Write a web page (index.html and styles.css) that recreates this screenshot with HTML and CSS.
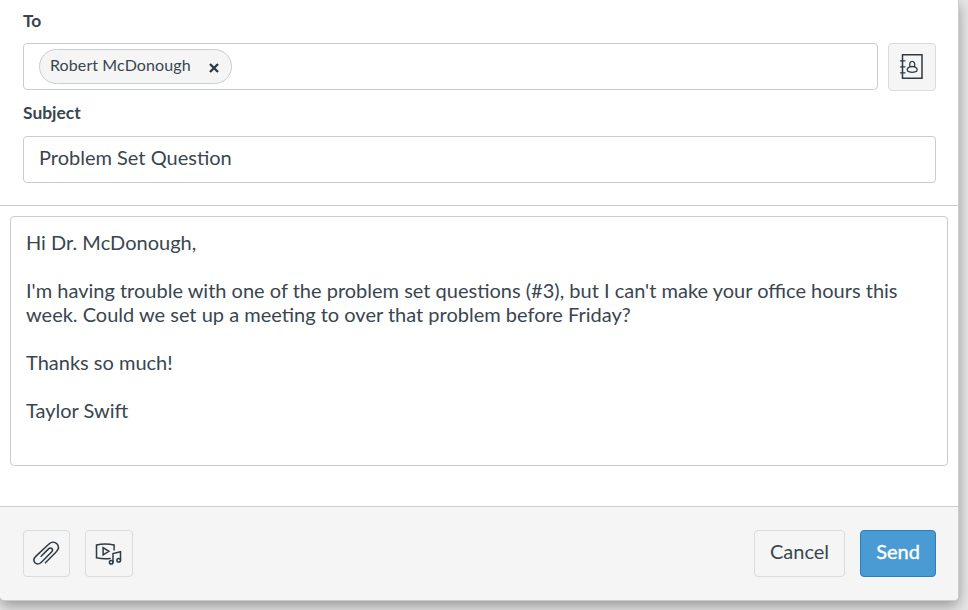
FILE: index.html
```html
<!DOCTYPE html>
<html lang="en">
<head>
<meta charset="utf-8">
<title>Compose Message</title>
<link rel="stylesheet" href="styles.css">
</head>
<body>
<form class="dialog">
  <div class="fields">
    <div class="label">To</div>
    <div class="recipient-row">
      <div class="input recipients">
        <span class="chip"><span class="chip-name">Robert McDonough</span><svg class="chip-close" viewBox="0 0 12 12"><path d="M2 2l8 8M10 2l-8 8"/></svg></span>
      </div>
      <button type="button" class="btn btn-square" aria-label="Address book">
        <svg class="icon book" viewBox="0 .7 40 40"><path d="M10.5 8.5h19.5v23.5H10.5z"/><path class="thin" d="M8.5 14.5h4.5M8.5 20.5h4.5M8.5 26.5h4.5M15.8 25c-1.7-2.4.4-4.8 4.4-4.8s6.1 2.4 4.4 4.8c-1.4 1.3-7.4 1.3-8.8 0zM18 20.2c-2-6.9 6.4-6.9 4.5 0"/></svg>
      </button>
    </div>
    <div class="label subject-label">Subject</div>
    <div class="input subject">Problem Set Question</div>
  </div>
  <div class="body">
    <div class="message">Hi Dr. McDonough,

I'm having trouble with one of the problem set questions (#3), but I can't make your office hours this
week. Could we set up a meeting to over that problem before Friday?

Thanks so much!

Taylor Swift</div>
  </div>
  <div class="footer">
    <button type="button" class="btn attach" aria-label="Attach file">
      <svg class="icon" viewBox="-.4 0 40 40"><path d="M18 28.7l10.5-10.5c2.9-2.9 3.2-6.2 1-8.4-2.2-2.2-5.8-2-8.5.7L8.6 22.1c-2.4 2.4-2.6 5-1 6.6 1.9 1.9 4.5 1.4 6.4-.5l9.9-9.9c1.3-1.3 1.5-2.8.6-3.7-.9-.9-2.4-.7-3.6.5l-7.2 7.2"/></svg>
    </button>
    <button type="button" class="btn btn-square media" aria-label="Record media">
      <svg class="icon" viewBox="-.8 -.4 40 40"><path d="M24.3 15.6v-5.1c-5.9-1.3-11.9-1.3-17.6 0v12.9c4.6.9 9.4 1.1 13.6.6M13.3 13.3v7.2l5.8-3.6zM23.2 27.8V19.2l7.5-1.9v8.4"/><circle cx="21.4" cy="27.8" r="1.8"/><circle cx="28.9" cy="25.9" r="1.8"/></svg>
    </button>
    <button type="button" class="btn cancel">Cancel</button>
    <button type="button" class="btn send">Send</button>
  </div>
</form>
</body>
</html>
```
FILE: styles.css
```css
* { box-sizing: border-box; }
body {
  margin: 0;
  height: 610px;
  overflow: hidden;
  background: #e7e7e7;
  color: #394650;
  font: 20px/24px Lato, sans-serif;
}
.dialog {
  width: 959px;
  height: 601px;
  display: flex;
  flex-direction: column;
  background: #fff;
  border: solid #c7cdd1;
  border-width: 0 1px 1px 0;
  border-radius: 0 0 5px 5px;
  box-shadow: 0 5px 14px rgba(0, 0, 0, .35);
  overflow: hidden;
}
.fields {
  height: 206px;
  padding: 9px 22px 0 23px;
  border-bottom: 1px solid #c7cdd1;
}
.label {
  font-size: 17.4px;
  font-weight: 700;
}
.subject-label { margin-top: 10px; }
.recipient-row {
  display: flex;
  gap: 10px;
  margin-top: 10px;
}
.input {
  height: 47px;
  border: 1px solid #c7cdd1;
  border-radius: 4px;
}
.recipients {
  flex: 1;
  padding: 5px 15px;
}
.chip {
  display: flex;
  width: 193px;
  height: 35px;
  padding: 0 11px 3px 10px;
  align-items: center;
  justify-content: space-between;
  border: 1px solid #c7cdd1;
  border-radius: 18px;
  background: #f5f5f5;
  font-size: 16px;
  letter-spacing: .1px;
}
.chip-close {
  width: 12px;
  height: 12px;
  margin-top: 6px;
  fill: none;
  stroke: #2d3b45;
  stroke-width: 2.4;
}
.subject {
  margin-top: 11px;
  padding: 8px 15px;
}
.body {
  height: 300px;
  padding: 10px;
}
.message {
  height: 250px;
  padding: 13px 15px;
  border: 1px solid #c7cdd1;
  border-radius: 4px;
  white-space: pre;
}
.footer {
  flex: 1;
  display: flex;
  padding: 23px 22px 0 23px;
  border-top: 1px solid #c7cdd1;
  background: #f5f5f5;
}
.btn {
  display: flex;
  width: 47px;
  height: 47px;
  padding: 0 0 4px;
  align-items: center;
  justify-content: center;
  border: 1px solid #d9dbdc;
  border-radius: 4px;
  background: #f5f5f5;
  color: inherit;
  font: inherit;
}
.btn-square { width: 48px; }
.recipient-row .btn {
  height: 48px;
  padding-bottom: 5px;
}
.media { margin-left: 15px; }
.cancel {
  width: 91px;
  margin-left: auto;
  padding-bottom: 5px;
}
.send {
  width: 76px;
  margin-left: 15px;
  padding-bottom: 5px;
  border-color: #2d7fb8;
  background: #4a9bd3;
  color: #fff;
  -webkit-text-stroke: .4px #fff;
}
.icon {
  width: 40px;
  height: 40px;
  margin-top: 4px;
  flex: none;
  fill: none;
  stroke: #2d3b45;
  stroke-width: 1.5;
  stroke-linecap: round;
}
.thin { stroke-width: 1.3; }
```
